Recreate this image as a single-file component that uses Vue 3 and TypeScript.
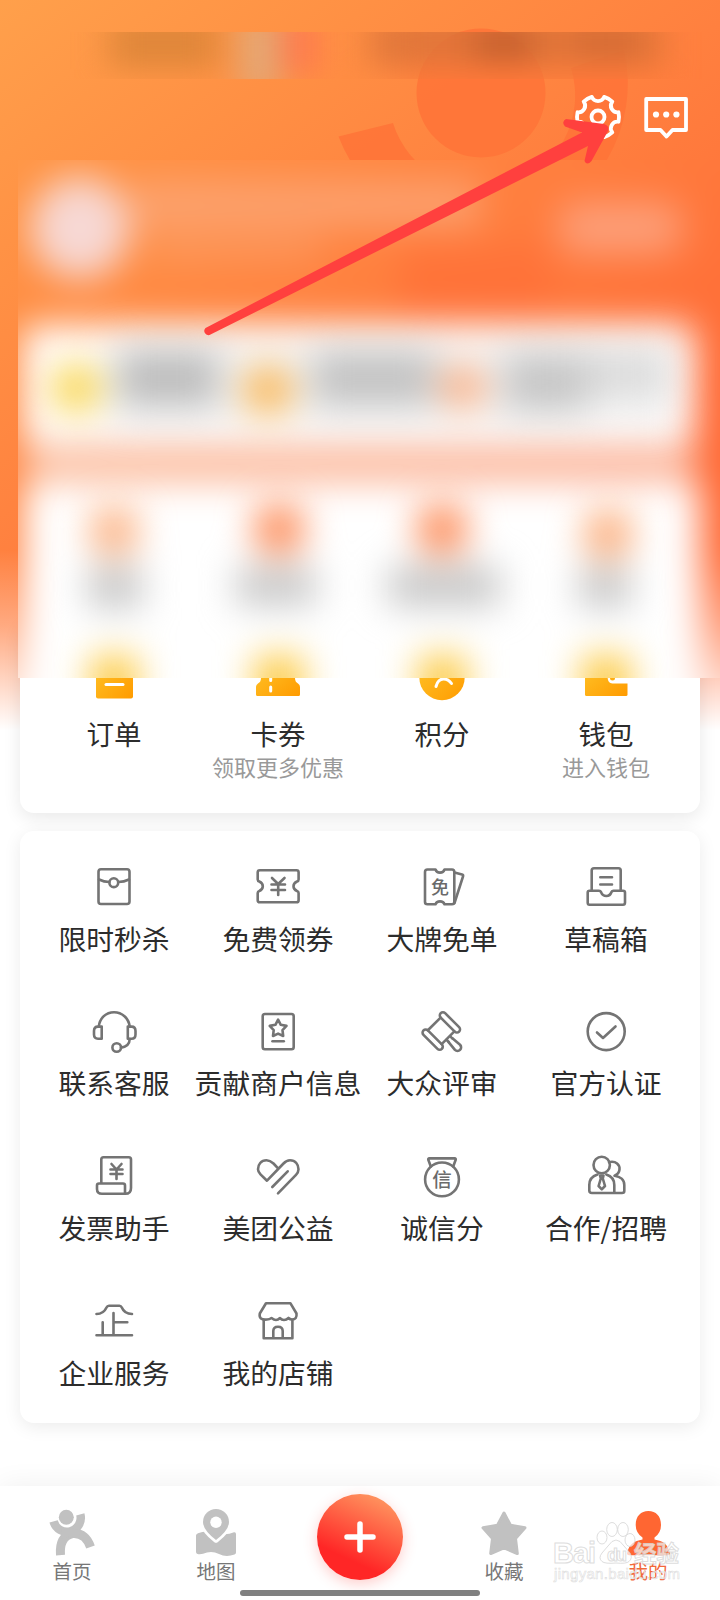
<script setup lang="ts">
interface Service {
  icon: string
  label: string
}

interface Asset {
  icon: string
  label: string
  hint?: string
}

const assets: Asset[] = [
  { icon: 'order', label: '订单' },
  { icon: 'coupon', label: '卡券', hint: '领取更多优惠' },
  { icon: 'points', label: '积分' },
  { icon: 'wallet', label: '钱包', hint: '进入钱包' },
]

const services: Service[] = [
  { icon: 'packet', label: '限时秒杀' },
  { icon: 'ticket', label: '免费领券' },
  { icon: 'free', label: '大牌免单' },
  { icon: 'draft', label: '草稿箱' },
  { icon: 'headset', label: '联系客服' },
  { icon: 'merchant', label: '贡献商户信息' },
  { icon: 'gavel', label: '大众评审' },
  { icon: 'verified', label: '官方认证' },
  { icon: 'invoice', label: '发票助手' },
  { icon: 'charity', label: '美团公益' },
  { icon: 'credit', label: '诚信分' },
  { icon: 'partner', label: '合作/招聘' },
  { icon: 'company', label: '企业服务' },
  { icon: 'shop', label: '我的店铺' },
]

/* Six-lobed cog outline: outer arcs joined by concave notches. */
function cogPath(cx: number, cy: number, r: number): string {
  const pt = (deg: number): string => {
    const a = (deg * Math.PI) / 180
    return `${(cx + r * Math.cos(a)).toFixed(2)} ${(cy + r * Math.sin(a)).toFixed(2)}`
  }
  let d = `M${pt(-13)}`
  for (let k = 0; k < 6; k++) {
    d += `A${r} ${r} 0 0 1 ${pt(k * 60 + 13)}A6.6 6.6 0 0 0 ${pt(k * 60 + 47)}`
  }
  return d + 'Z'
}

const cog = cogPath(28, 27, 21)
</script>

<template>
  <main class="page">
    <svg class="backdrop" viewBox="0 0 720 740">
      <defs>
        <linearGradient id="sky" gradientUnits="userSpaceOnUse" x1="0" y1="0" x2="457" y2="602">
          <stop offset="0" stop-color="#ffa04b" />
          <stop offset="0.3" stop-color="#ff9044" />
          <stop offset="0.6" stop-color="#ff803f" />
          <stop offset="1" stop-color="#ff6a36" />
        </linearGradient>
        <linearGradient id="fade" x1="0" y1="0" x2="0" y2="1">
          <stop offset="0" stop-color="#fff" stop-opacity="0" />
          <stop offset="0.4" stop-color="#fff" stop-opacity="0.35" />
          <stop offset="0.95" stop-color="#fff" />
        </linearGradient>
        <g id="scene">
          <rect width="720" height="740" fill="url(#sky)" />
          <g fill="#ff7438" opacity="0.85">
            <circle cx="481" cy="93" r="64.500" />
            <path d="M338.500 136.500L393 123A93 93 0 0 0 571 68L624 50A149.500 149.500 0 0 1 338.500 136.500Z" />
          </g>
          <rect y="550" width="720" height="190" fill="url(#fade)" />
        </g>
      </defs>
      <use href="#scene" />
    </svg>

    <svg class="status" viewBox="0 0 720 48">
      <defs>
        <filter id="b1" filterUnits="userSpaceOnUse" x="0" y="-80" width="720" height="210" color-interpolation-filters="sRGB"><feGaussianBlur stdDeviation="17 13" /></filter>
      </defs>
      <g filter="url(#b1)">
        <rect x="400" y="-10" width="270" height="70" fill="#ff7b3b" opacity="0.6" />
        <rect x="104" y="-16" width="112" height="54" fill="#dc8538" opacity="0.85" />
        <rect x="238" y="-16" width="38" height="78" fill="#dfac80" opacity="0.9" />
        <rect x="284" y="-16" width="30" height="58" fill="#fd7352" opacity="0.9" />
        <rect x="370" y="-16" width="298" height="52" fill="#da733a" opacity="0.75" />
        <rect x="478" y="-10" width="58" height="42" fill="#bd5a2c" opacity="0.65" />
        <rect x="580" y="-10" width="62" height="38" fill="#c9622f" opacity="0.4" />
      </g>
    </svg>

    <header class="toolbar">
      <svg class="tool" viewBox="0 0 56 56">
        <g fill="none" stroke="#fff" stroke-width="3.800" stroke-linejoin="round">
          <path :d="cog" />
          <circle cx="28" cy="27" r="6.500" />
        </g>
      </svg>
      <svg class="tool" viewBox="0 0 56 56">
        <path d="M9.700 9H49.500V40H36L30 46.500L24 40H9.700Z" fill="none" stroke="#fff" stroke-width="3.800" stroke-linejoin="round" transform="translate(-1.500)" />
        <g fill="#fff">
          <circle cx="18" cy="24.500" r="3.100" /><circle cx="28.200" cy="24.500" r="3.100" /><circle cx="38.400" cy="24.500" r="3.100" />
        </g>
      </svg>
    </header>

    <section class="card assets">
      <div v-for="a in assets" :key="a.icon" class="asset">
        <svg class="asset-icon" viewBox="0 0 48 48">
          <defs>
            <linearGradient :id="'gold-' + a.icon" x1="0" y1="0" x2="1" y2="1">
              <stop offset="0" stop-color="#ffc52a" />
              <stop offset="1" stop-color="#ff9b00" />
            </linearGradient>
          </defs>
          <template v-if="a.icon === 'order'">
            <rect x="6" y="2" width="37" height="43.500" rx="2" fill="url(#gold-order)" />
            <path d="M16 31.500H33" stroke="#fff" stroke-width="3" stroke-linecap="round" />
          </template>
          <template v-else-if="a.icon === 'coupon'">
            <path d="M2 6H46V18Q41 20 41 25Q41 29 44 30.500Q46 31.500 46 34V41.500Q46 43 44.500 43H3.500Q2 43 2 41.500V34Q2 31.500 4 30.500Q7 29 7 25Q7 20 2 18Z" fill="url(#gold-coupon)" />
            <path d="M16.700 22V27.500M16.700 34V38" stroke="#fff" stroke-width="3" stroke-linecap="round" />
          </template>
          <template v-else-if="a.icon === 'points'">
            <circle cx="24" cy="24.500" r="22.700" fill="url(#gold-points)" />
            <path d="M18 33.500Q20 26 25.500 26Q30.500 26 33.500 30.500M20 20L28 26" fill="none" stroke="#fff" stroke-width="3" stroke-linecap="round" />
          </template>
          <template v-else>
            <rect x="3" y="6" width="42.500" height="37" rx="1.500" fill="url(#gold-wallet)" />
            <path d="M47 15H31Q25 17 25.500 24T31 30.500H47Z" fill="#fff" />
            <circle cx="30.500" cy="25" r="2.500" fill="#ffad10" />
          </template>
        </svg>
        <span class="asset-label">{{ a.label }}</span>
        <span class="asset-hint">{{ a.hint }}</span>
      </div>
    </section>

    <section class="card services">
      <div v-for="s in services" :key="s.icon" class="service">
        <svg class="service-icon" viewBox="0 0 48 48">
          <template v-if="s.icon === 'packet'">
            <rect x="8.500" y="7.300" width="31" height="34.700" rx="2.500" />
            <path d="M9 17.500Q14 20 19.300 20M28.300 20Q34 20 39 17.500" />
            <circle cx="23.800" cy="20.700" r="4.400" />
          </template>
          <template v-else-if="s.icon === 'ticket'">
            <path d="M5.800 8.200H42.500Q44.600 8.200 44.600 10.300V17.500Q44.600 19 43 19.500Q39.500 21 39.500 24.200T43 29Q44.600 29.500 44.600 31V38.200Q44.600 40.300 42.500 40.300H5.800Q3.700 40.300 3.700 38.200V31Q3.700 29.500 5.300 29Q8.800 27.400 8.800 24.200T5.300 19.500Q3.700 19 3.700 17.500V10.300Q3.700 8.200 5.800 8.200Z" />
            <path d="M18 16L24.200 22L30.500 16M17.500 22.500H31M17.500 28H31M24.200 22V33" />
          </template>
          <template v-else-if="s.icon === 'free'">
            <path d="M9.500 7.500H17.500Q18.500 10.600 22 10.600T26.500 7.500H34Q36.300 7.500 36.300 10V40Q36.300 42.300 34 42.300H26.500Q25.500 39.400 22 39.400T17.500 42.300H9.500Q7 42.300 7 40V10Q7 7.500 9.500 7.500Z" />
            <path d="M36.500 10.500L44 12.500Q45.500 13 45 14.500L36.500 41" />
            <text x="22" y="31.800" font-size="18">免</text>
          </template>
          <template v-else-if="s.icon === 'draft'">
            <path d="M9.700 28V8.500Q9.700 6.300 12 6.300H36.500Q38.700 6.300 38.700 8.500V28" />
            <path d="M7.500 28.700H17Q18.500 28.700 19 30Q20.500 34 24.300 34T29.500 30Q30 28.700 31.500 28.700H41Q43 28.700 43 30.500V40.500Q43 42.700 41 42.700H7.500Q5.700 42.700 5.700 40.500V30.500Q5.700 28.700 7.500 28.700Z" />
            <path d="M18.300 15.300H30M18.300 22.500H30" />
          </template>
          <template v-else-if="s.icon === 'headset'">
            <path d="M8.800 19.500C9.800 11 16 5.200 24 5.200S38.700 11 39.700 19.500" />
            <path d="M8 19.600H11.700V31.800H8Q4 31.800 4 27.500V24Q4 19.600 8 19.600ZM41.500 19.600H37.800V31.800H41.500Q45.500 31.800 45.500 27.500V24Q45.500 19.600 41.500 19.600Z" />
            <path d="M39.700 32Q39.500 39.500 31 40.600" />
            <circle cx="26.700" cy="40.500" r="4.300" />
          </template>
          <template v-else-if="s.icon === 'merchant'">
            <rect x="8.700" y="7" width="31" height="35.300" rx="2.200" />
            <path d="M24.100 12.700L26.800 17.800L32.500 18.900L28.500 23.100L29.200 29L24.100 26.600L19 29L19.700 23.100L15.700 18.900L21.400 17.800Z" />
            <path d="M18.500 34.300H29.800" />
          </template>
          <template v-else-if="s.icon === 'gavel'">
            <g transform="translate(23.300 24) rotate(45)">
              <rect x="-13" y="-15.300" width="26" height="6.200" rx="3.100" />
              <rect x="-13" y="9.100" width="26" height="6.200" rx="3.100" />
              <path d="M-10 -9V9M9.500 -9V9M9.500 -2.500H13M9.500 2.500H13" />
              <path d="M13 -2.700L23 -3.500A3.500 3.500 0 0 1 23 3.700L13 2.700" />
            </g>
          </template>
          <template v-else-if="s.icon === 'verified'">
            <circle cx="24.200" cy="24.600" r="18.500" />
            <path d="M15 25.500L21 31L33.500 19.500" />
          </template>
          <template v-else-if="s.icon === 'invoice'">
            <path d="M11.300 31.500V8.500Q11.300 6.300 13.500 6.300H38.800Q41 6.300 41 8.500V37Q41 42.800 35.300 42.800H12Q7 42.800 7 38V34.500Q7 32.500 9 32.500H33Q35 32.500 35 34.500V42.800" />
            <path d="M21.500 13L26.500 18.500L31.500 13M20.500 18.500H32.500M20.500 23H32.500M26.500 18.500V28" />
          </template>
          <template v-else-if="s.icon === 'charity'">
            <path d="M24.300 17.700L19.500 12.500Q16 9.300 12.500 9.300C7 9.300 4 13.500 4 18.200Q4 20.800 6.500 23.300L13 29.700L29.500 12.500Q32.500 9.300 36 9.300C41.500 9.300 44.500 13.500 44.500 18.200Q44.500 21.200 42 23.800L24 42.300" />
            <path d="M33.700 20.300L18.300 36" />
          </template>
          <template v-else-if="s.icon === 'credit'">
            <circle cx="24" cy="28.400" r="16.900" />
            <path d="M12.800 15.500L10.300 8.800Q10 7.400 11.300 7.400H36.700Q38 7.400 37.700 8.800L35.200 15.500" />
            <text x="24" y="35.600" font-size="19.500">信</text>
          </template>
          <template v-else-if="s.icon === 'partner'">
            <circle cx="19.700" cy="14" r="8.200" />
            <path d="M27 11.200C34 9.500 38 14 37.500 18.500Q37 23 32.500 24.700C38.500 25.500 42.300 29 42.300 34V40Q42.300 42 40 42H10Q7.300 42 7.300 39.500V34Q7.300 26 15.500 23.500M24.300 23.500Q32.300 26 32.300 34V42" />
            <path d="M18 24.500H21.500L20.800 27.500L23 35L19.800 38.300L16.600 35L18.800 27.500Z" />
          </template>
          <template v-else-if="s.icon === 'company'">
            <path d="M6.500 18Q13.500 18 16.500 11.500Q17.300 9.700 19 9.700H29.500Q31 9.700 31.800 11.500Q34.500 18 42 18M23.500 17V39M23.500 26.200H37.300M12.700 26.200V39M6.500 39.300H42" />
          </template>
          <template v-else>
            <path d="M12 7.300H36.500L42.500 17.500Q43.200 23.500 38 23.500Q36 23.500 34.500 22Q32.500 24 30 24T26 22Q24 24 22 24T17.500 22Q15.500 23.500 13 23.500Q4.500 24.500 5.800 17.500Z" />
            <path d="M9.700 24V42.300H38.400V24M19.300 42V35Q19.300 30.700 24 30.700T28.700 35V42" />
          </template>
        </svg>
        <span class="service-label">{{ s.label }}</span>
      </div>
    </section>

    <nav class="tabs">
      <div class="tab">
        <svg class="tab-icon" viewBox="0 0 60 56">
          <circle cx="24.300" cy="12.300" r="7.500" fill="#c1c1c1" />
          <path d="M11.600 16.400A13.800 13.800 0 0 0 38.300 9.400" fill="none" stroke="#c1c1c1" stroke-width="8.500" />
          <path d="M18.500 50.200Q17 31.500 30.500 28.600Q43.500 27.500 48.500 42" fill="none" stroke="#c1c1c1" stroke-width="9" />
          <path d="M20 24.500L33 23L38 29L19 34Z" fill="#c1c1c1" />
        </svg>
        <span>首页</span>
      </div>
      <div class="tab">
        <svg class="tab-icon" viewBox="0 0 60 56">
          <path d="M12 28.300Q20 25 30 28T48 27.300Q50 27 50 29V47.500Q50 49 48.500 49.500Q40 52.500 33 49Q27 46 21 47.500Q15 50 11.500 49Q10 48.500 10 47V30.500Q10 29 12 28.300Z" fill="#c1c1c1" />
          <path d="M30 35Q17 25 17 17A13 13 0 0 1 43 17Q43 25 30 35Z" fill="#c1c1c1" stroke="#fff" stroke-width="5.500" stroke-linejoin="round" paint-order="stroke" />
          <circle cx="30" cy="17.300" r="5.700" fill="#fff" />
        </svg>
        <span>地图</span>
      </div>
      <div class="tab">
        <div class="publish">
          <svg viewBox="0 0 86 86"><path d="M43 30V56M30 43H56" stroke="#fff" stroke-width="5.500" stroke-linecap="round" /></svg>
        </div>
      </div>
      <div class="tab">
        <svg class="tab-icon" viewBox="0 0 60 56">
          <path d="M30 8L36.500 20.300L51 22.800L41.500 33.500L43.300 48.500L30 42.800L16.700 48.500L18.500 33.500L9 22.800L23.500 20.300Z" fill="#c1c1c1" stroke="#c1c1c1" stroke-width="3" stroke-linejoin="round" />
        </svg>
        <span>收藏</span>
      </div>
      <div class="tab active">
        <svg class="tab-icon" viewBox="0 0 60 56">
          <path d="M30.300 6C38 6 43 11 43 20Q43 28 36.500 32.500V34.500C45 36 50 39 52 48.500Q52 50.300 50 50.300H11Q9 50.300 9 48.500C11 39 16 36 24.500 34.500V32.500Q17.700 28 17.700 20C17.700 11 23 6 30.300 6Z" fill="#ff6632" />
        </svg>
        <span>我的</span>
      </div>
    </nav>
    <div class="home-bar"></div>

    <!-- Privacy blur over the profile area -->
    <svg class="privacy" viewBox="18 160 702 518">
      <defs>
        <filter id="b2" filterUnits="userSpaceOnUse" x="-60" y="60" width="860" height="740" color-interpolation-filters="sRGB"><feGaussianBlur stdDeviation="18" /></filter>
        <filter id="b3" filterUnits="userSpaceOnUse" x="-60" y="60" width="860" height="740" color-interpolation-filters="sRGB"><feGaussianBlur stdDeviation="18" /></filter>
      </defs>
      <use href="#scene" />
      <g filter="url(#b2)">
        <path d="M-60 60H800V800H-60Z" fill="url(#sky)" />
        <rect x="-60" y="550" width="860" height="190" fill="url(#fade)" />
        <ellipse cx="80" cy="228" rx="50" ry="51" fill="#f7d8d4" />
        <rect x="130" y="180" width="350" height="48" fill="#fba97d" opacity="0.7" />
        <rect x="150" y="235" width="170" height="28" fill="#fba97d" opacity="0.4" />
        <rect x="558" y="202" width="124" height="52" rx="20" fill="#fda583" opacity="0.85" />
        <rect x="400" y="245" width="150" height="75" fill="#ff6f37" opacity="0.7" />
        <rect x="22" y="325" width="672" height="122" rx="14" fill="#fff" />
        <rect x="25" y="440" width="670" height="46" fill="#fbdccf" opacity="0.65" />
        <rect x="22" y="482" width="678" height="320" rx="14" fill="#fff" />
      </g>
      <g filter="url(#b3)">
        <rect x="110" y="340" width="565" height="84" fill="#ddd" opacity="0.35" />
        <rect x="118" y="350" width="100" height="56" fill="#b4b4b4" opacity="0.85" />
        <rect x="313" y="350" width="122" height="56" fill="#b8b8b8" opacity="0.82" />
        <rect x="504" y="352" width="84" height="60" fill="#b8b8b8" opacity="0.75" />
        <rect x="580" y="350" width="88" height="46" fill="#d0d0d0" opacity="0.7" />
        <circle cx="76" cy="388" r="26" fill="#f9d655" />
        <circle cx="268" cy="390" r="26" fill="#fab95c" />
        <circle cx="463" cy="387" r="23" fill="#fbb085" />
        <g fill="#fb9c60">
          <circle cx="114" cy="531" r="25" opacity="0.8" />
          <circle cx="279" cy="529" r="26" fill="#fd8a56" />
          <circle cx="442" cy="529" r="26" fill="#fd8a56" />
          <circle cx="608" cy="534" r="25" opacity="0.85" />
        </g>
        <g fill="#c0c0c0" opacity="0.9">
          <rect x="88" y="566" width="54" height="42" /><rect x="236" y="567" width="80" height="38" />
          <rect x="388" y="566" width="112" height="40" /><rect x="579" y="567" width="52" height="40" />
        </g>
        <g fill="#fcc83c">
          <rect x="91" y="656" width="46" height="50" /><rect x="255" y="656" width="48" height="50" />
          <rect x="419" y="656" width="47" height="50" /><rect x="582" y="656" width="48" height="50" />
        </g>
      </g>
    </svg>

    <svg class="arrow" viewBox="0 0 430 240">
      <path d="M15.500 218L392 22.500L375 16.500Q371 12 376 9L414 14Q420 16 418 21L401.500 51Q397 56 394.500 51L398 36L19.500 225A4.200 4.200 0 0 1 15.500 218Z" transform="translate(-2 0)" fill="#ff403e" />
    </svg>

    <svg class="watermark" viewBox="0 0 140 75">
      <g fill="#fff" fill-opacity="0.7" stroke="#d2d2d2" stroke-opacity="0.75" stroke-width="1">
        <ellipse cx="51" cy="22.500" rx="5" ry="6.500" />
        <ellipse cx="61" cy="14.500" rx="5.300" ry="7" />
        <ellipse cx="72" cy="14.500" rx="5.300" ry="7" />
        <ellipse cx="79" cy="25" rx="5" ry="6.500" />
        <path d="M65 25Q69 25 73 31L79 38Q82 43 78 46.500Q75 49 65 48Q54 49 51 46.500Q47 43 51 38L57 31Q61 25 65 25Z" />
        <text x="2" y="47.500" font-size="29" font-weight="700" textLength="43">Bai</text>
        <text x="56" y="45.500" font-size="18" font-weight="700" textLength="20">du</text>
        <text x="83" y="46.500" font-size="22.500" font-weight="700">经验</text>
        <text x="3" y="64" font-size="15" textLength="126" stroke-width="0.600">jingyan.baidu.com</text>
      </g>
    </svg>
  </main>
</template>

<style>
body {
  margin: 0;
  background: #fff;
}
</style>

<style scoped>
.page {
  position: relative;
  display: flex;
  flex-direction: column;
  width: 720px;
  height: 1600px;
  overflow: hidden;
  background: #fff;
  font-family: "Noto Sans CJK SC", "Noto Sans", sans-serif;
  color: #2c2c2c;
}
.backdrop {
  position: absolute;
  top: 0;
  left: 0;
  width: 720px;
  height: 740px;
}
.status {
  position: relative;
  flex: none;
  width: 720px;
  height: 47px;
  margin-top: 32px;
  overflow: hidden;
}
.toolbar {
  position: relative;
  display: flex;
  flex: none;
  justify-content: flex-end;
  gap: 12px;
  height: 56px;
  margin-top: 11px;
  padding-right: 26px;
}
.tool {
  width: 56px;
  height: 56px;
}
.card {
  position: relative;
  display: grid;
  grid-template-columns: repeat(4, 164px);
  box-sizing: border-box;
  flex: none;
  width: 680px;
  margin: 0 auto;
  padding: 0 12px;
  background: #fff;
  border-radius: 14px;
  box-shadow: 0 5px 18px rgba(0, 0, 0, 0.09);
}
.assets {
  height: 193px;
  margin-top: 474px;
  padding-top: 33px;
}
.asset {
  display: flex;
  flex-direction: column;
  align-items: center;
}
.asset-icon {
  width: 48px;
  height: 48px;
}
.asset-label {
  margin-top: 13px;
  font-size: 27.5px;
  line-height: 38px;
}
.asset-hint {
  margin-top: -1px;
  font-size: 22px;
  line-height: 30px;
  color: #999;
}
.services {
  grid-auto-rows: 144.700px;
  height: 592px;
  margin-top: 18px;
  padding-top: 31px;
  box-shadow: 0 4px 18px rgba(0, 0, 0, 0.08);
}
.service {
  display: flex;
  flex-direction: column;
  align-items: center;
}
.service-icon {
  width: 48px;
  height: 48px;
  fill: none;
  stroke: #747474;
  stroke-width: 2.6;
  stroke-linecap: round;
  stroke-linejoin: round;
}
.service-icon text {
  fill: #6a6a6a;
  stroke: none;
  text-anchor: middle;
  font-weight: 500;
}
.service-label {
  margin-top: 7.5px;
  font-size: 27.8px;
  line-height: 40px;
  white-space: nowrap;
}
.tabs {
  position: relative;
  display: grid;
  grid-template-columns: repeat(5, 144px);
  flex: none;
  height: 114px;
  margin-top: 63px;
  background: #fff;
  box-shadow: 0 -2px 26px rgba(0, 0, 0, 0.06);
}
.tab {
  display: flex;
  flex-direction: column;
  align-items: center;
  padding-top: 19px;
  font-size: 19.5px;
  line-height: 24px;
  color: #777;
}
.tab-icon {
  width: 60px;
  height: 56px;
  margin-bottom: -2px;
}
.tab.active {
  color: #f2683a;
}
.publish {
  width: 86px;
  height: 86px;
  margin-top: -11px;
  border-radius: 50%;
  background: linear-gradient(205deg, #ff9c63 6%, #ff2626 72%);
  box-shadow: 0 4px 14px rgba(255, 60, 50, 0.25);
}
.home-bar {
  position: relative;
  flex: none;
  width: 240px;
  height: 6px;
  margin: -10px auto 0;
  border-radius: 3px;
  background: #808080;
}
.privacy {
  position: absolute;
  top: 160px;
  left: 18px;
  width: 702px;
  height: 518px;
}
.arrow {
  position: absolute;
  top: 110px;
  left: 192px;
  width: 430px;
  height: 240px;
}
.watermark {
  position: absolute;
  top: 1515px;
  left: 551px;
  width: 140px;
  height: 75px;
  font-family: "Liberation Sans", "Noto Sans CJK SC", sans-serif;
}
</style>
